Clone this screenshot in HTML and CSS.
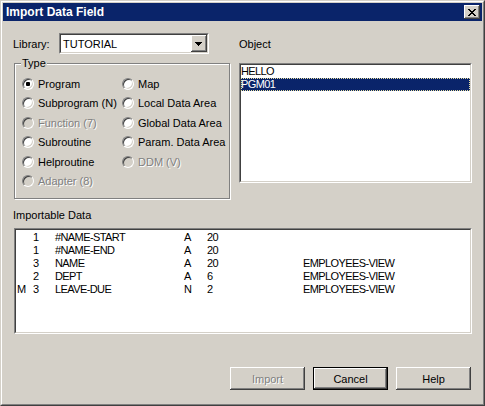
FILE: index.html
```html
<!DOCTYPE html>
<html>
<head>
<meta charset="utf-8">
<title>Import Data Field</title>
<link rel="stylesheet" href="styles.css">
</head>
<body>
<div class="window">
  <div class="frame">
    <div class="titlebar">
      <span class="title">Import Data Field</span>
      <span class="close"><svg width="8" height="7" viewBox="0 0 8 7" shape-rendering="crispEdges"><path fill="#000" d="M0 0h2v1H0z M6 0h2v1H6z M1 1h2v1H1z M5 1h2v1H5z M2 2h4v1H2z M3 3h2v1H3z M2 4h4v1H2z M1 5h2v1H1z M5 5h2v1H5z M0 6h2v1H0z M6 6h2v1H6z"/></svg></span>
    </div>
    <div class="content">
      <div class="top">
        <div class="left">
          <div class="lib-row">
            <span class="lib-label">Library:</span>
            <div class="combo">
              <div class="combo-inner">
                <span class="combo-text">TUTORIAL</span>
                <span class="combo-btn"><svg width="7" height="4" viewBox="0 0 7 4" shape-rendering="crispEdges"><path fill="#000" d="M0 0h7v1H0z M1 1h5v1H1z M2 2h3v1H2z M3 3h1v1H3z"/></svg></span>
              </div>
            </div>
          </div>
          <div class="group">
            <span class="group-title">Type</span>
            <div class="radios">
              <div class="radio-item"><span class="radio checked"></span><span>Program</span></div>
              <div class="radio-item"><span class="radio"></span><span>Map</span></div>
              <div class="radio-item"><span class="radio"></span><span>Subprogram (N)</span></div>
              <div class="radio-item"><span class="radio"></span><span>Local Data Area</span></div>
              <div class="radio-item disabled"><span class="radio"></span><span>Function (7)</span></div>
              <div class="radio-item"><span class="radio"></span><span>Global Data Area</span></div>
              <div class="radio-item"><span class="radio"></span><span>Subroutine</span></div>
              <div class="radio-item"><span class="radio"></span><span>Param. Data Area</span></div>
              <div class="radio-item"><span class="radio"></span><span>Helproutine</span></div>
              <div class="radio-item disabled"><span class="radio"></span><span>DDM (V)</span></div>
              <div class="radio-item disabled"><span class="radio"></span><span>Adapter (8)</span></div>
            </div>
          </div>
        </div>
        <div class="right">
          <div class="obj-label">Object</div>
          <div class="listbox obj-list">
            <div class="listbox-inner">
              <div class="item">HELLO</div>
              <div class="item selected">PGM01</div>
            </div>
          </div>
        </div>
      </div>
      <div class="section-label">Importable Data</div>
      <div class="listbox data-list">
        <div class="listbox-inner data-inner">
          <div class="row"><span></span><span>1</span><span>#NAME-START</span><span>A</span><span>20</span><span></span></div>
          <div class="row"><span></span><span>1</span><span>#NAME-END</span><span>A</span><span>20</span><span></span></div>
          <div class="row"><span></span><span>3</span><span>NAME</span><span>A</span><span>20</span><span>EMPLOYEES-VIEW</span></div>
          <div class="row"><span></span><span>2</span><span>DEPT</span><span>A</span><span>6</span><span>EMPLOYEES-VIEW</span></div>
          <div class="row"><span>M</span><span>3</span><span>LEAVE-DUE</span><span>N</span><span>2</span><span>EMPLOYEES-VIEW</span></div>
        </div>
      </div>
      <div class="buttons">
        <div class="btn disabled">Import</div>
        <div class="btn default">Cancel</div>
        <div class="btn">Help</div>
      </div>
    </div>
  </div>
</div>
</body>
</html>
```

FILE: styles.css
```css
html, body {
  margin: 0;
  padding: 0;
}
body {
  background: #d4d0c8;
  font-family: "Liberation Sans", Arial, sans-serif;
  font-size: 11px;
  color: #000;
}
.window {
  width: 485px;
  height: 406px;
  box-sizing: border-box;
  border: 1px solid;
  border-color: #d4d0c8 #404040 #404040 #d4d0c8;
}
.frame {
  height: 100%;
  box-sizing: border-box;
  border: 1px solid;
  border-color: #fff #808080 #808080 #fff;
  padding: 1px;
  display: flex;
  flex-direction: column;
}
.titlebar {
  height: 18px;
  flex: none;
  background: #0a246a;
  display: flex;
  align-items: center;
  justify-content: space-between;
  padding: 0 2px 0 3px;
}
.title {
  color: #fff;
  font-weight: bold;
  font-size: 12px;
}
.close {
  width: 16px;
  height: 14px;
  box-sizing: border-box;
  background: #d4d0c8;
  box-shadow: inset -1px -1px 0 #404040, inset 1px 1px 0 #fff, inset -2px -2px 0 #808080;
  display: flex;
  align-items: center;
  justify-content: center;
  padding-right: 1px;
}
.close svg, .combo-btn svg {
  display: block;
}
.content {
  flex: 1;
  padding: 12px 10px 0 10px;
  display: flex;
  flex-direction: column;
}
.top {
  display: grid;
  grid-template-columns: 218px 233px;
  column-gap: 8px;
  align-items: start;
}
.lib-row {
  display: flex;
  align-items: center;
  height: 21px;
}
.lib-label {
  width: 46px;
}
.combo {
  width: 150px;
  height: 21px;
  box-sizing: border-box;
  border: 1px solid;
  border-color: #808080 #fff #fff #808080;
}
.combo-inner {
  height: 100%;
  box-sizing: border-box;
  border: 1px solid;
  border-color: #404040 #d4d0c8 #d4d0c8 #404040;
  background: #fff;
  display: flex;
  align-items: center;
  justify-content: space-between;
  padding-left: 2px;
}
.combo-btn {
  width: 16px;
  height: 17px;
  box-sizing: border-box;
  background: #d4d0c8;
  box-shadow: inset -1px -1px 0 #404040, inset 1px 1px 0 #fff, inset -2px -2px 0 #808080;
  display: flex;
  align-items: center;
  justify-content: center;
  padding: 1px 1px 0 0;
}
.group {
  position: relative;
  margin: 9px 0 0 1px;
  width: 216px;
  height: 136px;
  box-sizing: border-box;
  border: 1px solid #808080;
  box-shadow: inset 1px 1px 0 #fff, 1px 1px 0 #fff;
  padding: 10px 0 0 7px;
}
.group-title {
  position: absolute;
  top: -8px;
  left: 6px;
  padding: 0 1px;
  line-height: 14px;
  background: #d4d0c8;
}
.radios {
  display: grid;
  grid-template-columns: 100px auto;
  grid-auto-rows: 19.5px;
}
.radio-item {
  display: flex;
  align-items: center;
  gap: 4px;
  white-space: nowrap;
}
.radio {
  position: relative;
  flex: none;
  width: 12px;
  height: 12px;
  box-sizing: border-box;
  border-radius: 50%;
  border: 1px solid;
  border-color: #808080 #fff #fff #808080;
  background: #fff;
  box-shadow: inset 1px 1px 0 #404040, inset -1px -1px 0 #d4d0c8;
}
.radio.checked::after {
  content: "";
  position: absolute;
  left: 3px;
  top: 3px;
  width: 4px;
  height: 4px;
  border-radius: 1px;
  background: #000;
}
.radio-item.disabled {
  color: #808080;
  text-shadow: 1px 1px 0 #fff;
}
.radio-item.disabled .radio {
  background: #d4d0c8;
}
.obj-label {
  height: 21px;
  display: flex;
  align-items: center;
}
.listbox {
  box-sizing: border-box;
  border: 1px solid;
  border-color: #808080 #fff #fff #808080;
}
.listbox-inner {
  height: 100%;
  box-sizing: border-box;
  border: 1px solid;
  border-color: #404040 #d4d0c8 #d4d0c8 #404040;
  background: #fff;
  overflow: hidden;
  letter-spacing: -0.6px;
}
.obj-list {
  margin-top: 9px;
  height: 120px;
}
.item {
  height: 13px;
  line-height: 13px;
  white-space: nowrap;
}
.item.selected {
  background: #0a246a;
  color: #fff;
  outline: 1px dotted #e8e0a0;
  outline-offset: -1px;
}
.section-label {
  margin-top: 9px;
  line-height: 14px;
  margin-bottom: 6px;
}
.data-list {
  margin-left: 1px;
  height: 106px;
}
.data-inner {
  padding: 1px 0 0 1px;
}
.row {
  display: grid;
  grid-template-columns: 16px 22px 129px 23px 96px 1fr;
  height: 13px;
  line-height: 13px;
  white-space: nowrap;
}
.buttons {
  display: flex;
  justify-content: flex-end;
  gap: 8px;
  margin-top: 33px;
  padding-right: 1px;
}
.btn {
  width: 75px;
  height: 23px;
  box-sizing: border-box;
  background: #d4d0c8;
  box-shadow: inset -1px -1px 0 #404040, inset 1px 1px 0 #fff, inset -2px -2px 0 #808080;
  display: flex;
  align-items: center;
  justify-content: center;
}
.btn.default {
  border: 1px solid #000;
  box-shadow: inset -1px -1px 0 #404040, inset 1px 1px 0 #fff, inset -2px -2px 0 #808080;
}
.btn.disabled {
  color: #808080;
  text-shadow: 1px 1px 0 #fff;
}
```
